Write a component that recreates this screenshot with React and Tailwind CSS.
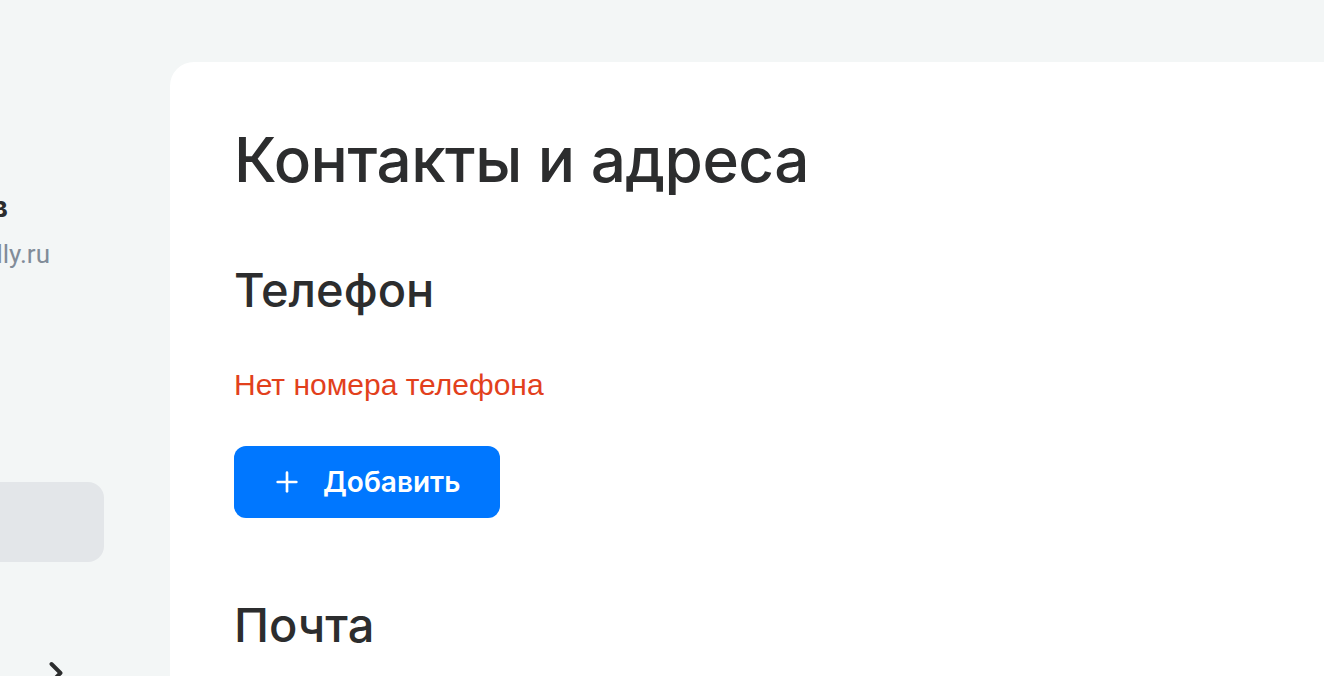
import { Plus, ChevronRight } from 'lucide-react';

const Sidebar = () => {
  return (
    <div className="w-[170px] shrink-0 overflow-hidden flex flex-col items-end pt-[190px]">
      {/* Profile name + email, cut off at the left edge */}
      <div className="mr-[162px] whitespace-nowrap text-[28px] leading-[34px] font-bold text-[#2c2d2e]">
        Иван Петров
      </div>
      <div className="mt-[14px] mr-[120px] whitespace-nowrap text-[26px] leading-[32px] text-[#818c99] font-['Roboto',sans-serif]">
        ivan@friendly.ru
      </div>

      {/* Selected menu item */}
      <div className="self-start mt-[212px] -ml-[40px] w-[144px] h-[80px] shrink-0 rounded-[16px] bg-[#e3e6e9]" />

      {/* Chevron */}
      <div className="self-start mt-[93px] ml-[38px] text-[#2c2d2e]">
        <ChevronRight size={36} strokeWidth={2.6} />
      </div>
    </div>
  );
};

const App = () => {
  return (
    <div className="w-[1324px] h-[676px] overflow-hidden bg-[#f3f6f6] flex font-['Inter',sans-serif]">
      <Sidebar />

      {/* Main card */}
      <div className="flex-1 mt-[62px] bg-white rounded-tl-[24px] pl-[64px] pt-[66px]">
        <h1 className="text-[62px] leading-[64px] font-medium text-[#2c2d2e] tracking-[-0.5px]">
          Контакты и адреса
        </h1>

        <h2 className="mt-[74px] text-[47px] leading-[48px] font-medium text-[#2c2d2e]">Телефон</h2>

        <p className="mt-[54px] text-[30px] leading-[34px] text-[#e2401c] font-['Liberation_Sans',sans-serif]">
          Нет номера телефона
        </p>

        <button className="mt-[44px] h-[72px] w-[266px] pl-[37px] rounded-[12px] bg-[#0077ff] text-white flex items-center gap-[20px]">
          <Plus size={32} strokeWidth={2} />
          <span className="text-[28px] font-semibold">Добавить</span>
        </button>

        <h2 className="mt-[83px] text-[47px] leading-[48px] font-medium text-[#2c2d2e]">Почта</h2>
      </div>
    </div>
  );
};

export default App;
